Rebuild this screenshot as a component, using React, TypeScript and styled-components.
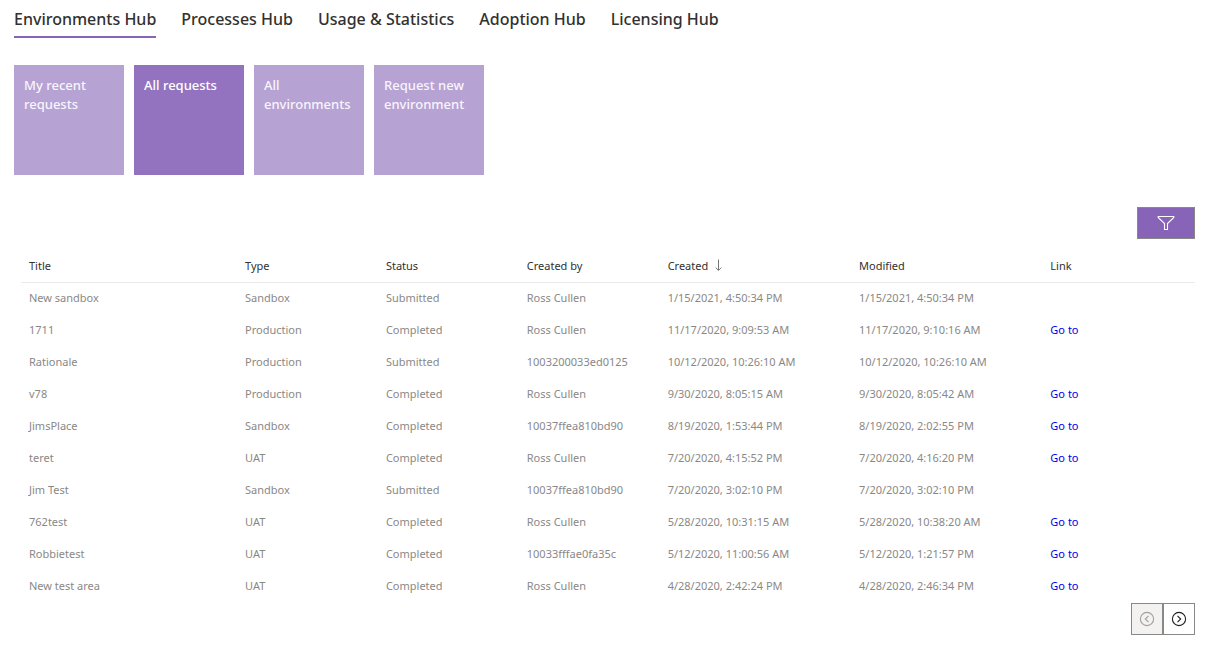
import React from "react";
import styled, { createGlobalStyle } from "styled-components";

const GlobalStyle = createGlobalStyle`
  *, *::before, *::after { box-sizing: border-box; }
  body {
    margin: 0;
    background: #fff;
    color: #323130;
    font-family: "Segoe UI", "Noto Sans", "Open Sans", sans-serif;
    font-size: 11px;
  }
  button { font-family: inherit; cursor: pointer; }
`;

const Page = styled.main`
  padding: 0 27px 10px 14px;
`;

const HubNav = styled.nav`
  display: flex;
  flex-wrap: wrap;
  gap: 25px;
`;

const HubLink = styled.a<{ $active?: boolean }>`
  height: 38px;
  border-bottom: 2px solid ${(p) => (p.$active ? "#8764b8" : "transparent")};
  color: #323130;
  font-size: 16px;
  font-weight: 500;
  line-height: 38px;
  text-decoration: none;
  white-space: nowrap;
`;

const Tiles = styled.div`
  display: flex;
  flex-wrap: wrap;
  gap: 10px;
  margin-top: 27px;
`;

const Tile = styled.button<{ $active?: boolean }>`
  display: flex;
  align-items: flex-start;
  width: 110px;
  height: 110px;
  padding: 11px 10px;
  border: 0;
  background: ${(p) => (p.$active ? "#9373c0" : "#b7a2d4")};
  color: ${(p) => (p.$active ? "#fff" : "#f8f5fc")};
  font-size: 13px;
  font-weight: 500;
  line-height: 19px;
  text-align: left;
`;

const Requests = styled.section`
  margin: 32px 0 0 7px;
`;

const Bar = styled.div`
  display: flex;
  justify-content: flex-end;
`;

const FilterButton = styled.button`
  display: flex;
  align-items: center;
  justify-content: center;
  width: 58px;
  height: 32px;
  padding: 0;
  border: 1px solid #8a8886;
  background: #8764b8;
  color: #fff;
`;

const Table = styled.table`
  width: 100%;
  margin-top: 11px;
  border-collapse: separate;
  border-spacing: 0;
  table-layout: fixed;
`;

const Column = styled.col<{ $share: string }>`
  width: ${(p) => p.$share};
`;

const HeadCell = styled.th`
  height: 33px;
  padding: 0 8px 2px;
  border-bottom: 1px solid #edebe9;
  font-weight: 400;
  text-align: left;
  white-space: nowrap;
`;

const SortButton = styled.button`
  display: flex;
  align-items: center;
  gap: 6px;
  padding: 0;
  border: 0;
  background: none;
  color: inherit;
  font-size: 11px;
`;

const Cell = styled.td`
  height: 32px;
  padding: 0 8px 4px;
  overflow: hidden;
  color: #8a8886;
  text-overflow: ellipsis;
  white-space: nowrap;
`;

const GoLink = styled.a`
  color: #0000ee;
  text-decoration: none;
`;

const PageButton = styled.button`
  display: flex;
  align-items: center;
  justify-content: center;
  width: 32px;
  height: 32px;
  padding: 0;
  border: 1px solid #8a8886;
  background: #fff;
  color: #201f1e;

  &:disabled {
    background: #f3f2f1;
    color: #a19f9d;
    cursor: default;
  }
`;

const hubs = ["Environments Hub", "Processes Hub", "Usage & Statistics", "Adoption Hub", "Licensing Hub"];
const tiles = ["My recent requests", "All requests", "All environments", "Request new environment"];
const shares = ["18.4%", "12%", "12%", "12%", "16.3%", "16.3%", "13%"];

type Row = [string, string, string, string, string, string, boolean];

const rows: Row[] = [
  ["New sandbox", "Sandbox", "Submitted", "Ross Cullen", "1/15/2021, 4:50:34 PM", "1/15/2021, 4:50:34 PM", false],
  ["1711", "Production", "Completed", "Ross Cullen", "11/17/2020, 9:09:53 AM", "11/17/2020, 9:10:16 AM", true],
  ["Rationale", "Production", "Submitted", "1003200033ed0125", "10/12/2020, 10:26:10 AM", "10/12/2020, 10:26:10 AM", false],
  ["v78", "Production", "Completed", "Ross Cullen", "9/30/2020, 8:05:15 AM", "9/30/2020, 8:05:42 AM", true],
  ["JimsPlace", "Sandbox", "Completed", "10037ffea810bd90", "8/19/2020, 1:53:44 PM", "8/19/2020, 2:02:55 PM", true],
  ["teret", "UAT", "Completed", "Ross Cullen", "7/20/2020, 4:15:52 PM", "7/20/2020, 4:16:20 PM", true],
  ["Jim Test", "Sandbox", "Submitted", "10037ffea810bd90", "7/20/2020, 3:02:10 PM", "7/20/2020, 3:02:10 PM", false],
  ["762test", "UAT", "Completed", "Ross Cullen", "5/28/2020, 10:31:15 AM", "5/28/2020, 10:38:20 AM", true],
  ["Robbietest", "UAT", "Completed", "10033fffae0fa35c", "5/12/2020, 11:00:56 AM", "5/12/2020, 1:21:57 PM", true],
  ["New test area", "UAT", "Completed", "Ross Cullen", "4/28/2020, 2:42:24 PM", "4/28/2020, 2:46:34 PM", true],
];

const FilterIcon = () => (
  <svg width="18" height="16" viewBox="0 0 18 16" fill="none" stroke="currentColor" strokeWidth="1.1" aria-hidden="true">
    <path d="M1.2 1.5H16.8V2.4L10.5 8.6V14.5H7.5V8.6L1.2 2.4Z" />
  </svg>
);

const SortDownIcon = () => (
  <svg width="8" height="12" viewBox="0 0 8 12" fill="none" stroke="#797775" aria-hidden="true">
    <path d="M4.5 0.5V11.3M1.7 8.6L4.5 11.4L7.3 8.6" />
  </svg>
);

const CircleChevron = ({ d }: { d: string }) => (
  <svg width="16" height="16" viewBox="0 0 16 16" fill="none" stroke="currentColor" strokeWidth="1.1" aria-hidden="true">
    <circle cx="8" cy="8" r="6.6" />
    <path d={d} />
  </svg>
);

export default function App() {
  return (
    <>
      <GlobalStyle />
      <Page>
        <HubNav>
          {hubs.map((hub, i) => (
            <HubLink key={hub} href="#" $active={i === 0}>
              {hub}
            </HubLink>
          ))}
        </HubNav>
        <Tiles>
          {tiles.map((tile, i) => (
            <Tile key={tile} type="button" $active={i === 1}>
              {tile}
            </Tile>
          ))}
        </Tiles>
        <Requests>
          <Bar>
            <FilterButton type="button" aria-label="Filter">
              <FilterIcon />
            </FilterButton>
          </Bar>
          <Table>
            <colgroup>
              {shares.map((share, i) => (
                <Column key={i} $share={share} />
              ))}
            </colgroup>
            <thead>
              <tr>
                <HeadCell>Title</HeadCell>
                <HeadCell>Type</HeadCell>
                <HeadCell>Status</HeadCell>
                <HeadCell>Created by</HeadCell>
                <HeadCell aria-sort="descending">
                  <SortButton type="button">
                    Created
                    <SortDownIcon />
                  </SortButton>
                </HeadCell>
                <HeadCell>Modified</HeadCell>
                <HeadCell>Link</HeadCell>
              </tr>
            </thead>
            <tbody>
              {rows.map(([title, type, status, by, created, modified, linked]) => (
                <tr key={title}>
                  <Cell>{title}</Cell>
                  <Cell>{type}</Cell>
                  <Cell>{status}</Cell>
                  <Cell>{by}</Cell>
                  <Cell>{created}</Cell>
                  <Cell>{modified}</Cell>
                  <Cell>{linked && <GoLink href="#">Go to</GoLink>}</Cell>
                </tr>
              ))}
            </tbody>
          </Table>
          <Bar>
            <PageButton type="button" aria-label="Previous page" disabled>
              <CircleChevron d="M9.5 4.8L6.3 8L9.5 11.2" />
            </PageButton>
            <PageButton type="button" aria-label="Next page">
              <CircleChevron d="M6.5 4.8L9.7 8L6.5 11.2" />
            </PageButton>
          </Bar>
        </Requests>
      </Page>
    </>
  );
}
